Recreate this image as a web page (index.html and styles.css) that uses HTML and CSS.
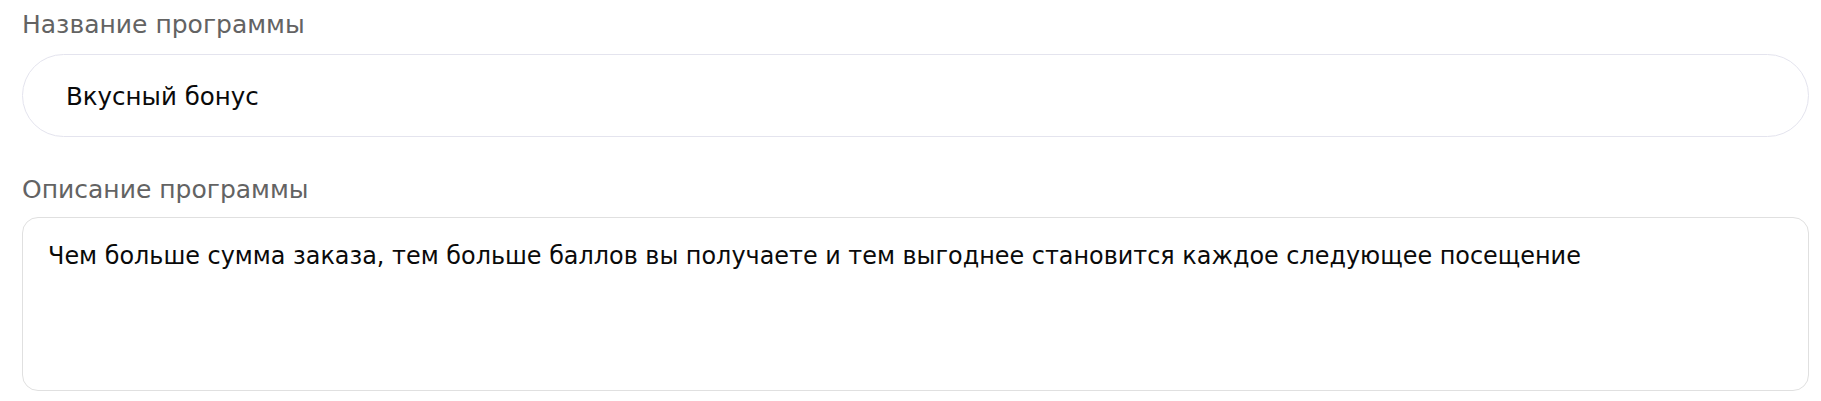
FILE: index.html
```html
<!DOCTYPE html>
<html lang="ru">
<head>
<meta charset="utf-8">
<title>Программа лояльности</title>
<link rel="stylesheet" href="styles.css">
</head>
<body>
<form class="form">
  <label class="field">
    <span class="field-label">Название программы</span>
    <input class="input" type="text" value="Вкусный бонус">
  </label>
  <label class="field field-desc">
    <span class="field-label">Описание программы</span>
    <textarea class="textarea">Чем больше сумма заказа, тем больше баллов вы получаете и тем выгоднее становится каждое следующее посещение</textarea>
  </label>
</form>
</body>
</html>
```
FILE: styles.css
```css
* { box-sizing: border-box; }

body {
  margin: 0;
  background: #ffffff;
  font-family: "DejaVu Sans", "Noto Sans", sans-serif;
}

.form {
  display: flex;
  flex-direction: column;
  padding: 10px 12px 0 22px;
}

.field {
  display: flex;
  flex-direction: column;
  gap: 14px;
}

.field-desc {
  margin-top: 38px;
  gap: 12px;
}

.field-label {
  font-size: 25px;
  line-height: 30px;
  color: #636363;
}

.input,
.textarea {
  display: block;
  width: 100%;
  margin: 0;
  font-family: inherit;
  color: #0a0a0a;
  background: #ffffff;
  outline: none;
}

.input {
  height: 83px;
  padding: 2px 20px 0 43px;
  font-size: 24.5px;
  border: 1px solid #e4e4ee;
  border-radius: 42px;
}

.textarea {
  height: 174px;
  padding: 20px 26px 0 25px;
  font-size: 23.9px;
  line-height: 36px;
  border: 1px solid #e0e0e0;
  border-radius: 16px;
  resize: none;
  overflow: hidden;
}
```
